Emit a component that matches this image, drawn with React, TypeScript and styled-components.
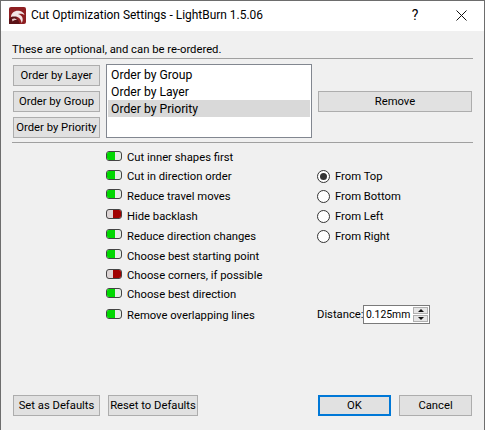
import React from 'react'
import styled, { createGlobalStyle } from 'styled-components'

const GlobalStyle = createGlobalStyle`
  html, body {
    margin: 0;
    padding: 0;
    background: #fff;
  }
  * {
    box-sizing: border-box;
  }
`

const Window = styled.div`
  width: 485px;
  height: 430px;
  display: flex;
  flex-direction: column;
  border: 1px solid #6d6d6d;
  border-bottom: 0;
  background: #f0f0f0;
  color: #000;
  font-family: Roboto, 'Noto Sans', sans-serif;
  font-size: 11.25px;
`

const TitleBar = styled.div`
  height: 30px;
  flex: none;
  display: flex;
  align-items: center;
  padding: 0 0 2px 8px;
  background: #fff;
  font-size: 11.95px;
`

const TitleText = styled.span`
  margin-left: 5px;
  flex: 1;
  white-space: nowrap;
`

const TitleButton = styled.div`
  width: 46px;
  display: flex;
  align-items: center;
  justify-content: center;
  font-size: 14px;
`

const Body = styled.div`
  flex: 1;
  display: flex;
  flex-direction: column;
  padding: 9px 11px 14px 11px;
`

const Hint = styled.div`
  height: 18px;
  line-height: 19px;
`

const Rule = styled.div<{ $gap?: number }>`
  height: 1px;
  flex: none;
  background: #a0a0a0;
  margin-top: ${p => p.$gap ?? 0}px;
`

const OrderRow = styled.div`
  display: flex;
  margin-top: 5px;
  height: 74px;
`

const OrderButtons = styled.div`
  width: 87px;
  margin-left: 1px;
  margin-top: 1px;
  display: flex;
  flex-direction: column;
  gap: 5px;
`

const Button = styled.button<{ $width?: number; $focused?: boolean }>`
  width: ${p => (p.$width ? `${p.$width}px` : '100%')};
  height: 21px;
  flex: none;
  padding: 0;
  background: #e1e1e1;
  border: ${p => (p.$focused ? '2px solid #0078d7' : '1px solid #adadad')};
  font: inherit;
  color: #000;
  white-space: nowrap;
`

const OrderList = styled.div`
  width: 206px;
  height: 74px;
  margin-left: 6px;
  padding: 1px;
  background: #fff;
  border: 1px solid #828790;
`

const OrderItem = styled.div<{ $selected?: boolean }>`
  height: 17px;
  line-height: 19px;
  padding-left: 3px;
  font-size: 12.2px;
  background: ${p => (p.$selected ? '#d9d9d9' : 'transparent')};
`

const RemoveWrap = styled.div`
  flex: 1;
  display: flex;
  align-items: center;
  padding: 0 1px 0 6px;
`

const Options = styled.div`
  display: flex;
  flex: 1;
  margin-top: 4px;
`

const ToggleColumn = styled.div`
  width: 304px;
  padding: 1px 0 0 94px;
  display: flex;
  flex-direction: column;
`

const ToggleRow = styled.div<{ $height: number }>`
  height: ${p => p.$height}px;
  display: flex;
  align-items: center;
  gap: 5px;
  white-space: nowrap;
`

const ToggleTrack = styled.div<{ $on: boolean }>`
  width: 16px;
  height: 10px;
  flex: none;
  display: flex;
  flex-direction: ${p => (p.$on ? 'row' : 'row-reverse')};
  margin-bottom: 4px;
  border: 1px solid #444;
  border-radius: 3px;
  overflow: hidden;
  background: ${p => (p.$on ? '#e4ece4' : '#dcd4d4')};
`

const ToggleFill = styled.div<{ $on: boolean }>`
  width: 8px;
  background: ${p => (p.$on ? '#00d800' : '#a00000')};
`

const SideColumn = styled.div`
  flex: 1;
  display: flex;
  flex-direction: column;
`

const RadioGroup = styled.div`
  margin-top: 19px;
  padding-left: 1px;
  display: flex;
  flex-direction: column;
`

const RadioRow = styled.div`
  height: 20px;
  display: flex;
  align-items: center;
  gap: 5px;
`

const RadioCircle = styled.div<{ $checked?: boolean }>`
  width: 13px;
  height: 13px;
  border: 1px solid #333;
  border-radius: 50%;
  background: #fff;
  display: flex;
  align-items: center;
  justify-content: center;

  &::after {
    content: '';
    width: 7px;
    height: 7px;
    border-radius: 50%;
    background: ${p => (p.$checked ? '#333' : 'transparent')};
  }
`

const DistanceRow = styled.div`
  margin-top: 59px;
  height: 19px;
  display: flex;
  align-items: center;
  padding-left: 1px;
`

const DistanceLabel = styled.span`
  width: 46px;
`

const SpinBox = styled.div`
  width: 67px;
  height: 19px;
  display: flex;
  align-items: center;
  justify-content: space-between;
  padding: 1px 1px 1px 2px;
  background: #fff;
  border: 1px solid #7a7a7a;
  font-size: 10.4px;
`

const SpinArrows = styled.div`
  width: 15px;
  height: 15px;
  display: flex;
  flex-direction: column;
  gap: 1px;
`

const SpinArrow = styled.div<{ $down?: boolean }>`
  flex: 1;
  display: flex;
  align-items: center;
  justify-content: center;
  background: #e6e6e6;
  border: 1px solid #b0b0b0;

  &::after {
    content: '';
    border-left: 3px solid transparent;
    border-right: 3px solid transparent;
    ${p => (p.$down ? 'border-top: 3px solid #111;' : 'border-bottom: 3px solid #111;')}
  }
`

const Footer = styled.div`
  display: flex;
  align-items: center;
  padding: 0 1px;
`

const FooterGap = styled.div`
  flex: 1;
`

const FooterSpace = styled.div`
  width: 8px;
`

const LightBurnLogo = () => (
  <svg width="17" height="17" viewBox="0 0 17 17">
    <rect x="0" y="0" width="17" height="17" rx="2" fill="#8e1f22" />
    <path d="M0 17 L0 12 L5 8 L9 9 L7 11 L9 13 L11 17 Z" fill="#5a1216" />
    <path
      d="M2 10 C2 6 6 3 11 4 C13 4.5 15 6 15.5 8 C13.5 6.5 11 6.5 9 7 C11 7.5 13 9 13.5 11 C14 13 13.5 15 12.5 16 C12.5 13.5 11 11 8.5 10 C6.5 9.4 4 9.5 2 10 Z"
      fill="#f3e6e6"
    />
    <path d="M3 12 C5 11 7 11.5 8 13 C6.5 12.8 5 13 3.5 14.5 Z" fill="#e8caca" />
  </svg>
)

const CloseIcon = () => (
  <svg width="11" height="11" viewBox="0 0 11 11">
    <path d="M0.5 0.5 L10.5 10.5 M10.5 0.5 L0.5 10.5" stroke="#111" strokeWidth="1" fill="none" />
  </svg>
)

const toggles = [
  { label: 'Cut inner shapes first', on: true, height: 19 },
  { label: 'Cut in direction order', on: true, height: 19 },
  { label: 'Reduce travel moves', on: true, height: 20 },
  { label: 'Hide backlash', on: false, height: 20 },
  { label: 'Reduce direction changes', on: true, height: 20 },
  { label: 'Choose best starting point', on: true, height: 20 },
  { label: 'Choose corners, if possible', on: false, height: 19 },
  { label: 'Choose best direction', on: true, height: 19 },
  { label: 'Remove overlapping lines', on: true, height: 23 },
]

const radios = ['From Top', 'From Bottom', 'From Left', 'From Right']

export default function App() {
  return (
    <>
      <GlobalStyle />
      <Window>
        <TitleBar>
          <LightBurnLogo />
          <TitleText>Cut Optimization Settings - LightBurn 1.5.06</TitleText>
          <TitleButton>?</TitleButton>
          <TitleButton>
            <CloseIcon />
          </TitleButton>
        </TitleBar>
        <Body>
          <Hint>These are optional, and can be re-ordered.</Hint>
          <Rule />
          <OrderRow>
            <OrderButtons>
              <Button>Order by Layer</Button>
              <Button>Order by Group</Button>
              <Button>Order by Priority</Button>
            </OrderButtons>
            <OrderList>
              <OrderItem>Order by Group</OrderItem>
              <OrderItem>Order by Layer</OrderItem>
              <OrderItem $selected>Order by Priority</OrderItem>
            </OrderList>
            <RemoveWrap>
              <Button>Remove</Button>
            </RemoveWrap>
          </OrderRow>
          <Rule $gap={4} />
          <Options>
            <ToggleColumn>
              {toggles.map(t => (
                <ToggleRow key={t.label} $height={t.height}>
                  <ToggleTrack $on={t.on}>
                    <ToggleFill $on={t.on} />
                  </ToggleTrack>
                  {t.label}
                </ToggleRow>
              ))}
            </ToggleColumn>
            <SideColumn>
              <RadioGroup>
                {radios.map((r, i) => (
                  <RadioRow key={r}>
                    <RadioCircle $checked={i === 0} />
                    {r}
                  </RadioRow>
                ))}
              </RadioGroup>
              <DistanceRow>
                <DistanceLabel>Distance:</DistanceLabel>
                <SpinBox>
                  0.125mm
                  <SpinArrows>
                    <SpinArrow />
                    <SpinArrow $down />
                  </SpinArrows>
                </SpinBox>
              </DistanceRow>
            </SideColumn>
          </Options>
          <Footer>
            <Button $width={87}>Set as Defaults</Button>
            <FooterSpace />
            <Button $width={90}>Reset to Defaults</Button>
            <FooterGap />
            <Button $width={73} $focused>OK</Button>
            <FooterSpace />
            <Button $width={73}>Cancel</Button>
          </Footer>
        </Body>
      </Window>
    </>
  )
}
